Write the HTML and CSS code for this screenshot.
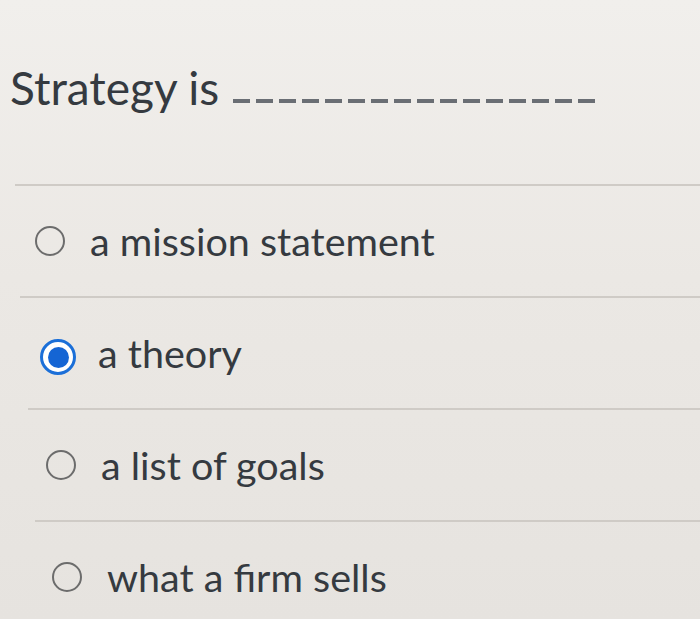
FILE: index.html
```html
<!DOCTYPE html>
<html>
<head>
<meta charset="utf-8">
<link rel="stylesheet" href="styles.css">
</head>
<body>
<div class="page">
  <div class="question">
    <span class="qtext">Strategy is</span>
    <span class="blank"></span>
  </div>
  <div class="divider d1"></div>
  <div class="option o1">
    <span class="radio"></span><span class="label">a mission statement</span>
  </div>
  <div class="divider d2"></div>
  <div class="option o2">
    <span class="radio checked"><span class="dot"></span></span><span class="label">a theory</span>
  </div>
  <div class="divider d3"></div>
  <div class="option o3">
    <span class="radio"></span><span class="label">a list of goals</span>
  </div>
  <div class="divider d4"></div>
  <div class="option o4">
    <span class="radio"></span><span class="label">what a firm sells</span>
  </div>
</div>
</body>
</html>
```
FILE: styles.css
```css
html, body {
  margin: 0;
  padding: 0;
}
body {
  width: 700px;
  height: 619px;
  overflow: hidden;
  background: linear-gradient(180deg, #f1efec 0%, #ebe8e4 45%, #e6e3df 100%);
  font-family: Lato, "Open Sans", sans-serif;
  color: #353a40;
}
.page {
  display: flex;
  flex-direction: column;
  padding-top: 58px;
}
.question {
  display: flex;
  align-items: baseline;
  padding-left: 10px;
  height: 60px;
}
.qtext {
  font-size: 46px;
  line-height: 60px;
}
.blank {
  width: 368px;
  height: 4px;
  margin-left: 14px;
  background: repeating-linear-gradient(90deg, #6a6e74 0 17px, transparent 17px 23px);
  transform: translateY(-2px);
}
.divider {
  height: 2px;
  background: #cfcbc6;
}
.d1 { margin: 66px 0 0 15px; }
.d2 { margin: 0 0 0 20px; }
.d3 { margin: 0 0 0 28px; }
.d4 { margin: 0 0 0 35px; }
.option {
  display: flex;
  align-items: center;
  height: 110px;
}
.o1 { padding-left: 35px; }
.o2 { padding-left: 40px; }
.o3 { padding-left: 46px; }
.o4 { padding-left: 52px; }
.radio {
  width: 26px;
  height: 26px;
  border: 2.5px solid #6c6c6c;
  border-radius: 50%;
  flex: none;
  display: flex;
  align-items: center;
  justify-content: center;
  box-sizing: content-box;
}
.radio.checked {
  width: 30px;
  height: 30px;
  border: 3px solid #1b6fd8;
  background: #fff;
  margin-top: 8px;
}
.dot {
  width: 21px;
  height: 21px;
  border-radius: 50%;
  background: #1565d4;
}
.label {
  font-size: 39.5px;
  margin-left: 25px;
  line-height: 1;
}
.o2 .label { margin-left: 22px; }
```
